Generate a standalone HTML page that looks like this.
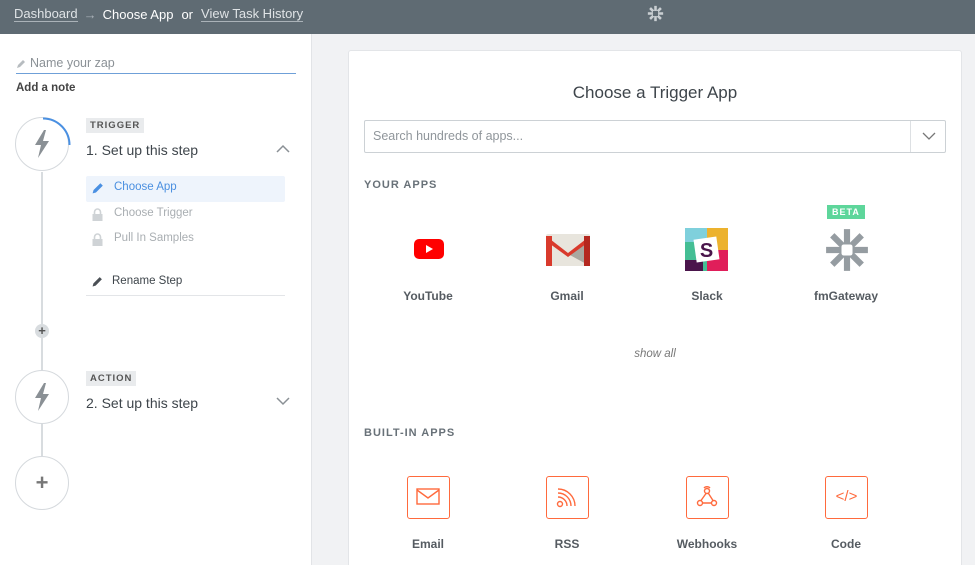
<!DOCTYPE html>
<html><head><meta charset="utf-8"><style>
*{box-sizing:border-box;margin:0;padding:0}
html,body{width:975px;height:565px;overflow:hidden}
body{font-family:"Liberation Sans",sans-serif;background:#f1f2f4;position:relative;color:#4a4f55}
.hdr{position:absolute;left:0;top:0;width:975px;height:34px;background:#5f6b73;color:#fff;font-size:13px;display:flex;align-items:center;padding-left:14px;padding-bottom:6px;gap:6px}
.u{color:#dfe3e6;border-bottom:1px solid #aab2b8;line-height:15px}
.left{position:absolute;left:0;top:34px;width:312px;height:531px;background:#fff;border-right:1px solid #e2e4e7}
.abs{position:absolute}
.card{position:absolute;left:348px;top:50px;width:614px;height:530px;background:#fff;border:1px solid #e3e5e8;border-radius:3px}
.lbl{position:absolute;font-size:12px;font-weight:bold;color:#555b61;text-align:center;width:120px}
.sec{position:absolute;font-size:11px;letter-spacing:1px;font-weight:bold;color:#687178}
.box{position:absolute;width:43px;height:43px;border:1.5px solid #ff6a3d;border-radius:3px;top:425px}
.circ{position:absolute;width:54px;height:54px;border:1.5px solid #d5d9dd;border-radius:50%;background:#fff}
.tag{position:absolute;background:#e9ebed;font-size:9.5px;font-weight:bold;letter-spacing:1px;color:#555;padding:2px 4px}
</style></head><body>
<div class="hdr">
<span class="u">Dashboard</span>
<span style="color:#aab2b8">→</span>
<span>Choose App</span>
<span style="margin:0 2px">or</span>
<span class="u">View Task History</span>
<svg class="abs" style="left:647px;top:5px" width="17" height="17" viewBox="0 0 20 20"><g stroke="#c9ced2" stroke-width="3"><line x1="10" y1="1" x2="10" y2="19"/><line x1="1" y1="10" x2="19" y2="10"/><line x1="3.6" y1="3.6" x2="16.4" y2="16.4"/><line x1="16.4" y1="3.6" x2="3.6" y2="16.4"/></g><rect x="7" y="7" width="6" height="6" fill="#5f6b73"/></svg>
</div>
<div class="left">
<svg class="abs" style="left:16px;top:25px" width="10" height="10" viewBox="0 0 10 10"><path d="M1 9 L2 6 L7 1 L9 3 L4 8Z" fill="#b7bcc0"/></svg>
<div class="abs" style="left:30px;top:22px;font-size:12.5px;color:#8b9196">Name your zap</div>
<div class="abs" style="left:16px;top:39px;width:280px;height:1px;background:#6fa0d8"></div>
<div class="abs" style="left:16px;top:48px;font-size:11.5px;font-weight:bold;color:#444">Add a note</div>
<div class="abs" style="left:41px;top:138px;width:2px;height:284px;background:#d8dcdf"></div>
<div class="circ" style="left:15px;top:83px"></div>
<svg class="abs" style="left:15px;top:83px" width="56" height="56" viewBox="0 0 56 56"><path d="M28 1.5 A26.5 26.5 0 0 1 54.5 28" fill="none" stroke="#4a90e2" stroke-width="2"/></svg>
<svg class="abs" style="left:33px;top:96px" width="18" height="28" viewBox="0 0 18 28"><path d="M11 0 L2 15 L8 15 L5 28 L16 11 L10 11 L13 0Z" fill="#8a9095"/></svg>
<div class="tag" style="left:86px;top:84px">TRIGGER</div>
<div class="abs" style="left:86px;top:108px;font-size:14px;color:#3e454b">1. Set up this step</div>
<svg class="abs" style="left:276px;top:110px" width="14" height="9"><path d="M1 8 L7 2 L13 8" fill="none" stroke="#8a9095" stroke-width="1.5"/></svg>
<div class="abs" style="left:86px;top:142px;width:199px;height:26px;background:#eef4fc;border-radius:2px"></div>
<svg class="abs" style="left:92px;top:148px" width="12" height="12" viewBox="0 0 10 10"><path d="M0.5 9.5 L1.3 6.7 L7 1 L9 3 L3.3 8.7Z" fill="#4a90e2"/></svg>
<div class="abs" style="left:114px;top:147px;font-size:11.5px;color:#4a8fe0">Choose App</div>
<svg class="abs" style="left:92px;top:174px" width="11" height="13" viewBox="0 0 11 13"><path d="M2.5 6 V4 a3 3 0 0 1 6 0 V6" fill="none" stroke="#cfd3d6" stroke-width="1.6"/><rect x="0.5" y="6" width="10" height="7" fill="#cfd3d6"/></svg>
<div class="abs" style="left:114px;top:173px;font-size:11.5px;color:#a9aeb2">Choose Trigger</div>
<svg class="abs" style="left:92px;top:199px" width="11" height="13" viewBox="0 0 11 13"><path d="M2.5 6 V4 a3 3 0 0 1 6 0 V6" fill="none" stroke="#cfd3d6" stroke-width="1.6"/><rect x="0.5" y="6" width="10" height="7" fill="#cfd3d6"/></svg>
<div class="abs" style="left:114px;top:198px;font-size:11.5px;color:#a9aeb2">Pull In Samples</div>
<svg class="abs" style="left:92px;top:242px" width="11" height="11" viewBox="0 0 10 10"><path d="M0.5 9.5 L1.3 6.7 L7 1 L9 3 L3.3 8.7Z" fill="#4a4f55"/></svg>
<div class="abs" style="left:112px;top:241px;font-size:11.5px;color:#3e454b">Rename Step</div>
<div class="abs" style="left:86px;top:261px;width:199px;height:1px;background:#e3e5e8"></div>
<div class="abs" style="left:35px;top:290px;width:14px;height:14px;border-radius:50%;background:#d8dcdf;color:#555;font-size:13px;font-weight:bold;text-align:center;line-height:14px">+</div>
<div class="circ" style="left:15px;top:336px"></div>
<svg class="abs" style="left:33px;top:349px" width="18" height="28" viewBox="0 0 18 28"><path d="M11 0 L2 15 L8 15 L5 28 L16 11 L10 11 L13 0Z" fill="#8a9095"/></svg>
<div class="tag" style="left:86px;top:337px">ACTION</div>
<div class="abs" style="left:86px;top:361px;font-size:14px;color:#3e454b">2. Set up this step</div>
<svg class="abs" style="left:276px;top:363px" width="14" height="9"><path d="M1 1 L7 7 L13 1" fill="none" stroke="#8a9095" stroke-width="1.5"/></svg>
<div class="circ" style="left:15px;top:422px"></div>
<div class="abs" style="left:15px;top:422px;width:54px;line-height:54px;text-align:center;font-size:22px;font-weight:bold;color:#777">+</div>
</div>
<div class="card">
<div class="abs" style="left:0;top:32px;width:612px;text-align:center;font-size:17px;color:#3e454b">Choose a Trigger App</div>
<div class="abs" style="left:15px;top:69px;width:582px;height:33px;border:1px solid #ccd1d5;border-radius:2px">
<div class="abs" style="left:8px;top:8px;font-size:12.5px;color:#90969b">Search hundreds of apps...</div>
<div class="abs" style="left:545px;top:0;width:1px;height:31px;background:#dde0e3"></div>
<svg class="abs" style="left:557px;top:11px" width="14" height="9"><path d="M1 1 L7 7 L13 1" fill="none" stroke="#777" stroke-width="1.3"/></svg>
</div>
<div class="sec" style="left:15px;top:128px">YOUR APPS</div>
<svg class="abs" style="left:65px;top:188px" width="30" height="20"><rect width="30" height="20" rx="5" fill="#f00"/><path d="M12 6 L19 10 L12 14Z" fill="#fff"/></svg>
<svg class="abs" style="left:197px;top:183px" width="44" height="32" viewBox="0 0 44 32"><rect width="44" height="32" rx="2" fill="#e8e5dd"/><path d="M22 20 L44 4 L44 32 Z" fill="#a9a8a0"/><path d="M0 2 L22 19 L44 2 L44 7 L22 23 L0 7Z" fill="#d93a2c"/><rect x="0" y="2" width="6" height="30" fill="#d93a2c"/><rect x="38" y="2" width="6" height="30" fill="#b4281f"/></svg>
<svg class="abs" style="left:336px;top:177px" width="43" height="43" viewBox="0 0 43 43"><rect width="43" height="43" rx="3" fill="#44be94"/><rect x="0" y="0" width="22" height="14" fill="#7fd0dc"/><rect x="22" y="0" width="21" height="22" fill="#ecb22e"/><rect x="22" y="22" width="21" height="21" fill="#e01e5a"/><rect x="0" y="32" width="18" height="11" fill="#4a154b"/><rect x="10" y="10" width="23" height="23" fill="#fff" transform="rotate(-8 21.5 21.5)"/><text x="21.5" y="29" text-anchor="middle" font-size="20" font-weight="bold" fill="#4a154b" font-family="Liberation Sans">S</text></svg>
<div class="abs" style="left:478px;top:154px;background:#5ed69b;color:#fff;font-size:9px;font-weight:bold;letter-spacing:1px;padding:2px 5px">BETA</div>
<svg class="abs" style="left:476px;top:177px" width="44" height="44" viewBox="0 0 20 20"><g stroke="#959ca1" stroke-width="2.8"><line x1="10" y1="0.5" x2="10" y2="19.5"/><line x1="0.5" y1="10" x2="19.5" y2="10"/><line x1="3.3" y1="3.3" x2="16.7" y2="16.7"/><line x1="16.7" y1="3.3" x2="3.3" y2="16.7"/></g><rect x="7.5" y="7.5" width="5" height="5" rx="1" fill="#fff"/></svg>
<div class="lbl" style="left:19px;top:238px">YouTube</div>
<div class="lbl" style="left:158px;top:238px">Gmail</div>
<div class="lbl" style="left:298px;top:238px">Slack</div>
<div class="lbl" style="left:437px;top:238px">fmGateway</div>
<div class="abs" style="left:0;top:297px;width:612px;text-align:center;font-size:11.5px;font-style:italic;color:#777">show all</div>
<div class="sec" style="left:15px;top:376px">BUILT-IN APPS</div>
<div class="box" style="left:58px"><svg width="40" height="40" viewBox="0 0 40 40"><rect x="9" y="12" width="22" height="15" fill="none" stroke="#ff6a3d" stroke-width="1.4"/><path d="M9 13 L20 21 L31 13" fill="none" stroke="#ff6a3d" stroke-width="1.4"/></svg></div>
<div class="box" style="left:197px"><svg width="40" height="40" viewBox="0 0 40 40" fill="none" stroke="#ff6a3d" stroke-width="1.4"><circle cx="13" cy="27" r="2.5"/><path d="M11 20 a9 9 0 0 1 9 9"/><path d="M11 16 a13 13 0 0 1 13 13"/><path d="M11 12 a17 17 0 0 1 17 17"/></svg></div>
<div class="box" style="left:337px"><svg width="40" height="40" viewBox="0 0 40 40" fill="none" stroke="#ff6a3d" stroke-width="1.4"><circle cx="20" cy="14" r="2.5"/><circle cx="13" cy="26" r="2.5"/><circle cx="27" cy="26" r="2.5"/><path d="M15.5 26 H24.5 M19 16.5 L14 23.5 M21.5 16.5 L26 23.5"/><path d="M17 11 a4 4 0 0 1 6 0"/></svg></div>
<div class="box" style="left:476px"><div style="text-align:center;line-height:40px;color:#ff6a3d;font-size:15px;font-family:'Liberation Sans'">&lt;/&gt;</div></div>
<div class="lbl" style="left:19px;top:486px">Email</div>
<div class="lbl" style="left:158px;top:486px">RSS</div>
<div class="lbl" style="left:298px;top:486px">Webhooks</div>
<div class="lbl" style="left:437px;top:486px">Code</div>
</div>
</body></html>
